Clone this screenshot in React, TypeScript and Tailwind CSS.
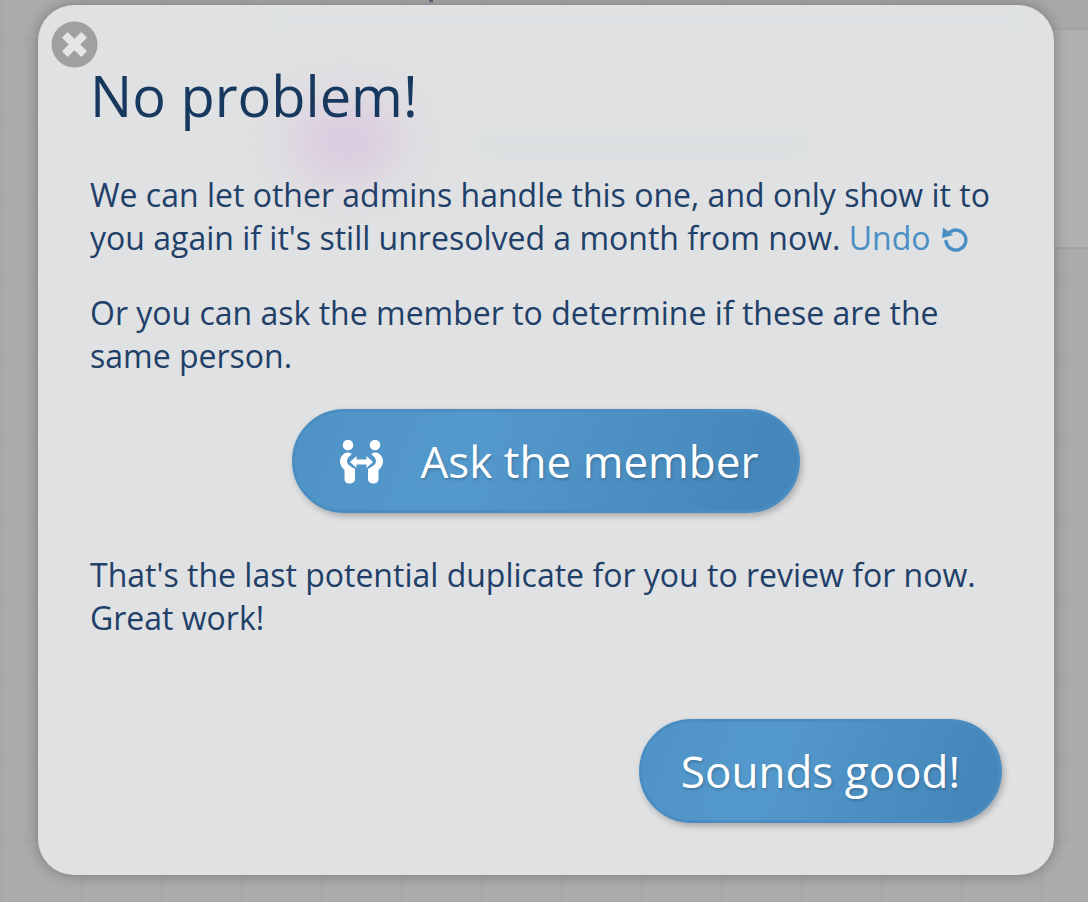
const openSans = { fontFamily: '"Open Sans", sans-serif' };

const blueButton =
  'rounded-full text-white text-[44px] bg-[linear-gradient(110deg,#4f93c6,#5499cd_35%,#4587ba_90%)] border-[3px] border-[#4b8dc0] shadow-[2px_3px_6px_rgba(0,0,0,0.25)] [text-shadow:1px_2px_3px_rgba(0,0,0,0.2)]';

function CloseIcon() {
  return (
    <svg viewBox="0 0 48 48" className="w-12 h-12">
      <circle cx="23.5" cy="23.5" r="23" fill="#a0a0a0" />
      <path d="M13.8 13.8 L33.2 33.2 M33.2 13.8 L13.8 33.2" stroke="#e4e5e6" strokeWidth="8" />
    </svg>
  );
}

function UndoIcon() {
  return (
    <svg viewBox="0 0 26 26" className="w-[26px] h-[26px] inline-block align-[-3px] ml-[3px]" fill="none">
      <path d="M8 5 A10 10 0 1 1 4 14.5" stroke="#4a8fc4" strokeWidth="3.4" strokeLinecap="round" />
      <path d="M1 0.5 L0 11 L11 8 Z" fill="#4a8fc4" />
    </svg>
  );
}

function PeopleIcon() {
  const body =
    'M5 15 C1.5 17 0 20 0 23 C0 27 2 30 4.5 32 L4.5 41 C4.5 44 6.5 45.5 9.5 45.5 C12.5 45.5 15 44 15 41 L15 31 C12 29 7 27 7 23.5 C7 20 9.5 18 12 16 C10 14.5 7 14 5 15 Z';
  return (
    <svg viewBox="0 0 43 46" className="w-[45px] h-[46px]" fill="white">
      <circle cx="8" cy="7" r="5.3" />
      <circle cx="35" cy="7" r="5.3" />
      <path d={body} />
      <path d={body} transform="translate(43 0) scale(-1 1)" />
      <path d="M10 24 L16.5 18 V21.5 H26.5 V18 L33 24 L26.5 30 V26.5 H16.5 V30 Z" />
    </svg>
  );
}

export default function App() {
  return (
    <div
      className="relative w-[1088px] h-[902px] overflow-hidden bg-[#ababab] bg-[linear-gradient(#a5a7a7_2px,transparent_2px),linear-gradient(90deg,#a5a7a7_2px,transparent_2px)] bg-[size:80px_80px] bg-[position:1px_39px] pt-[5px] pl-[38px]"
      style={openSans}
    >
      {/* panels of the page behind the modal */}
      <div className="absolute left-[900px] top-0 w-[188px] h-[28px] bg-[#a7a9a9]" />
      <div className="absolute left-[900px] top-[28px] w-[188px] h-[221px] bg-[#b0b0b0] border-y-2 border-[#a2a3a3]" />
      <div className="absolute left-[429px] top-0 w-[4px] h-[2px] bg-[#5b6b80]" />

      <div className="relative w-[1016px] h-[870px] rounded-[36px] bg-[#e0e1e3] shadow-[0_0_14px_rgba(0,0,0,0.3)] overflow-hidden">
        {/* blurred content behind the modal */}
        <div className="absolute left-[255px] top-[100px] w-[105px] h-[72px] rounded-full bg-[#dac8de] blur-[24px]" />
        <div className="absolute left-[430px] top-[125px] w-[350px] h-[30px] rounded-full bg-[#dde0e1] blur-[8px]" />
        <div className="absolute left-[230px] top-[5px] w-[760px] h-[20px] bg-[#dfe2e3] blur-[8px]" />

        <div className="absolute left-[13px] top-[16px]">
          <CloseIcon />
        </div>

        <div className="relative flex flex-col h-full pl-[52px] pr-[52px] text-[#1f4068] text-[32px] leading-[43px]">
          <h1 className="text-[56px] leading-[74px] mt-[53px] text-[#17395f]">No problem!</h1>

          <p className="mt-[41px]">
            We can let other admins handle this one, and only show it to you again if it's still unresolved a month from now.{' '}
            <span className="text-[#4a8fc4]">
              Undo <UndoIcon />
            </span>
          </p>

          <p className="mt-[32px]">Or you can ask the member to determine if these are the same person.</p>

          <div className="flex justify-center mt-[32px]">
            <button className={`flex items-center justify-center w-[508px] h-[104px] pl-[5px] ${blueButton}`}>
              <PeopleIcon />
              <span className="ml-[37px]">Ask the member</span>
            </button>
          </div>

          <p className="mt-[40px]">That's the last potential duplicate for you to review for now. Great work!</p>

          <div className="flex justify-end mt-auto mb-[52px]">
            <button className={`w-[363px] h-[104px] ${blueButton}`}>Sounds good!</button>
          </div>
        </div>
      </div>
    </div>
  );
}
